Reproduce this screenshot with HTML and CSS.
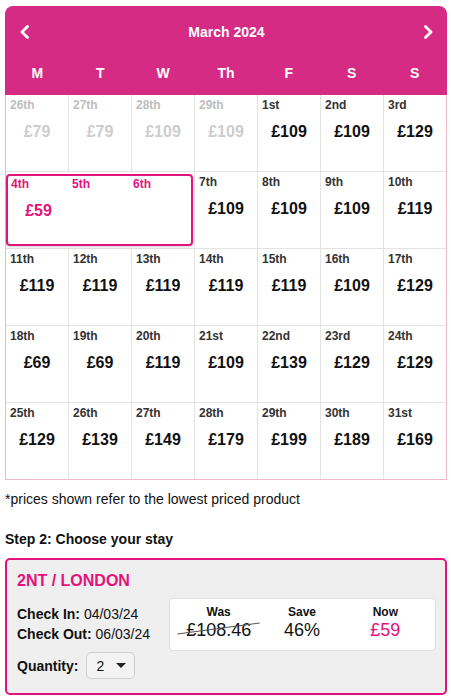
FILE: index.html
```html
<!DOCTYPE html>
<html lang="en">
<head>
<meta charset="utf-8">
<title>Choose your dates</title>
<link rel="stylesheet" href="styles.css">
</head>
<body>
<div class="page">
  <div class="calendar">
    <div class="cal-head">
      <div class="cal-title">
        <button class="nav" aria-label="Previous month">
          <svg width="12" height="14" viewBox="0 0 12 14"><polyline points="8.5,1.5 3,7 8.5,12.5" fill="none" stroke="#fff" stroke-width="2.8" stroke-linecap="round" stroke-linejoin="round"/></svg>
        </button>
        <span class="month">March 2024</span>
        <button class="nav" aria-label="Next month">
          <svg width="12" height="14" viewBox="0 0 12 14"><polyline points="3.5,1.5 9,7 3.5,12.5" fill="none" stroke="#fff" stroke-width="2.8" stroke-linecap="round" stroke-linejoin="round"/></svg>
        </button>
      </div>
      <div class="cal-days">
        <span>M</span><span>T</span><span>W</span><span>Th</span><span>F</span><span>S</span><span>S</span>
      </div>
    </div>
    <div class="cal-grid">
      <div class="cell past"><span class="d">26th</span><span class="p">£79</span></div>
      <div class="cell past"><span class="d">27th</span><span class="p">£79</span></div>
      <div class="cell past"><span class="d">28th</span><span class="p">£109</span></div>
      <div class="cell past"><span class="d">29th</span><span class="p">£109</span></div>
      <div class="cell"><span class="d">1st</span><span class="p">£109</span></div>
      <div class="cell"><span class="d">2nd</span><span class="p">£109</span></div>
      <div class="cell"><span class="d">3rd</span><span class="p">£129</span></div>

      <div class="sel-wrap">
        <div class="sel">
          <div class="sel-col"><span class="d">4th</span><span class="p">£59</span></div>
          <div class="sel-col"><span class="d">5th</span></div>
          <div class="sel-col"><span class="d">6th</span></div>
        </div>
      </div>
      <div class="cell"><span class="d">7th</span><span class="p">£109</span></div>
      <div class="cell"><span class="d">8th</span><span class="p">£109</span></div>
      <div class="cell"><span class="d">9th</span><span class="p">£109</span></div>
      <div class="cell"><span class="d">10th</span><span class="p">£119</span></div>

      <div class="cell"><span class="d">11th</span><span class="p">£119</span></div>
      <div class="cell"><span class="d">12th</span><span class="p">£119</span></div>
      <div class="cell"><span class="d">13th</span><span class="p">£119</span></div>
      <div class="cell"><span class="d">14th</span><span class="p">£119</span></div>
      <div class="cell"><span class="d">15th</span><span class="p">£119</span></div>
      <div class="cell"><span class="d">16th</span><span class="p">£109</span></div>
      <div class="cell"><span class="d">17th</span><span class="p">£129</span></div>

      <div class="cell"><span class="d">18th</span><span class="p">£69</span></div>
      <div class="cell"><span class="d">19th</span><span class="p">£69</span></div>
      <div class="cell"><span class="d">20th</span><span class="p">£119</span></div>
      <div class="cell"><span class="d">21st</span><span class="p">£109</span></div>
      <div class="cell"><span class="d">22nd</span><span class="p">£139</span></div>
      <div class="cell"><span class="d">23rd</span><span class="p">£129</span></div>
      <div class="cell"><span class="d">24th</span><span class="p">£129</span></div>

      <div class="cell"><span class="d">25th</span><span class="p">£129</span></div>
      <div class="cell"><span class="d">26th</span><span class="p">£139</span></div>
      <div class="cell"><span class="d">27th</span><span class="p">£149</span></div>
      <div class="cell"><span class="d">28th</span><span class="p">£179</span></div>
      <div class="cell"><span class="d">29th</span><span class="p">£199</span></div>
      <div class="cell"><span class="d">30th</span><span class="p">£189</span></div>
      <div class="cell"><span class="d">31st</span><span class="p">£169</span></div>
    </div>
  </div>

  <p class="note">*prices shown refer to the lowest priced product</p>

  <h2 class="step">Step 2: Choose your stay</h2>

  <div class="stay">
    <h3 class="stay-title">2NT / LONDON</h3>
    <div class="stay-body">
      <div class="stay-info">
        <div class="line"><b>Check In:</b> 04/03/24</div>
        <div class="line"><b>Check Out:</b> 06/03/24</div>
        <div class="qty">
          <b>Quantity:</b>
          <div class="select"><span>2</span><span class="caret"></span></div>
        </div>
      </div>
      <div class="prices">
        <div class="pcol">
          <span class="plabel">Was</span>
          <span class="pval was">£108.46</span>
        </div>
        <div class="pcol">
          <span class="plabel">Save</span>
          <span class="pval">46%</span>
        </div>
        <div class="pcol">
          <span class="plabel">Now</span>
          <span class="pval now">£59</span>
        </div>
      </div>
    </div>
  </div>
</div>
</body>
</html>
```

FILE: styles.css
```css
* { box-sizing: border-box; }

html, body {
  margin: 0;
  padding: 0;
  background: #fff;
}

body {
  font-family: "Liberation Sans", Arial, Helvetica, sans-serif;
  color: #111;
}

.page {
  width: 451px;
  padding: 6px 4px 0 5px;
}

/* Calendar */
.calendar {
  width: 442px;
}

.cal-head {
  background: #d62b85;
  border-radius: 8px 8px 0 0;
  color: #fff;
  height: 89px;
}

.cal-title {
  height: 52px;
  display: flex;
  align-items: center;
  justify-content: space-between;
  padding: 0 13px 0 14px;
}

.nav {
  background: none;
  border: 0;
  padding: 0;
  width: 12px;
  height: 14px;
  display: flex;
}

.month {
  font-weight: bold;
  font-size: 14px;
}

.cal-days {
  height: 37px;
  display: grid;
  grid-template-columns: repeat(7, 1fr);
  padding: 0 1px 7px;
  align-items: center;
  font-weight: bold;
  font-size: 14px;
}

.cal-days span {
  text-align: center;
}

.cal-grid {
  display: grid;
  grid-template-columns: repeat(7, 1fr);
  grid-auto-rows: 76px;
  gap: 1px;
  background: #e3e3e3;
  border: 1px solid #f0b6c9;
  border-top: 0;
}

.cell {
  background: #fff;
  display: flex;
  flex-direction: column;
  padding: 3px 4px 0;
}

.d {
  font-size: 12px;
  line-height: 14px;
  font-weight: bold;
  color: #333;
}

.p {
  font-size: 16px;
  line-height: 20px;
  font-weight: bold;
  color: #111;
  text-align: center;
  margin-top: 10px;
}

.past .d { color: #bdbdbd; }
.past .p { color: #cdcdcd; }

.sel-wrap {
  grid-column: span 3;
  background: #fff;
  padding: 2px 1px 2px 0;
}

.sel {
  height: 100%;
  border: 2px solid #e3127c;
  border-radius: 4px;
  box-shadow: 0 1px 3px rgba(0, 0, 0, 0.18);
  display: grid;
  grid-template-columns: repeat(3, 1fr);
}

.sel-col {
  display: flex;
  flex-direction: column;
  padding: 1px 3px 0;
}

.sel .d, .sel .p { color: #e3127c; }

/* Notes */
.note {
  margin: 9px 0 0;
  font-size: 14px;
  line-height: 20px;
  color: #111;
}

.step {
  margin: 20px 0 0;
  font-size: 14px;
  line-height: 20px;
  font-weight: bold;
  color: #111;
}

/* Stay panel */
.stay {
  margin-top: 9px;
  width: 442px;
  border: 2px solid #e3127c;
  border-radius: 5px;
  background: #efefef;
  padding: 11px 9px 14px 10px;
}

.stay-title {
  margin: 0;
  font-size: 16px;
  line-height: 20px;
  font-weight: bold;
  color: #e3127c;
}

.stay-body {
  margin-top: 7px;
  display: grid;
  grid-template-columns: 152px 1fr;
}

.stay-info {
  padding-top: 6px;
  font-size: 14px;
  color: #111;
}

.line {
  line-height: 20px;
}

.qty {
  margin-top: 8px;
  display: flex;
  align-items: center;
  gap: 8px;
}

.select {
  width: 49px;
  height: 27px;
  border: 1px solid #cfcfcf;
  border-radius: 5px;
  background: #f3f3f3;
  display: flex;
  align-items: center;
  justify-content: space-between;
  padding: 0 8px 0 9px;
  font-size: 14px;
}

.caret {
  width: 0;
  height: 0;
  border-left: 5px solid transparent;
  border-right: 5px solid transparent;
  border-top: 5px solid #222;
}

.prices {
  align-self: start;
  height: 53px;
  background: #fff;
  border: 1px solid #e0e0e0;
  border-radius: 4px;
  display: grid;
  grid-template-columns: repeat(3, 1fr);
  padding: 6px 8px 0 7px;
}

.pcol {
  display: flex;
  flex-direction: column;
  align-items: center;
}

.plabel {
  font-size: 12px;
  line-height: 14px;
  font-weight: bold;
  color: #111;
}

.pval {
  font-size: 18px;
  line-height: 22px;
  color: #111;
}

.was {
  position: relative;
}

.was::after {
  content: "";
  position: absolute;
  left: -9px;
  top: 9px;
  width: 83px;
  height: 1px;
  background: #555;
  transform: rotate(-7.6deg);
}

.now {
  color: #e3127c;
}
```
